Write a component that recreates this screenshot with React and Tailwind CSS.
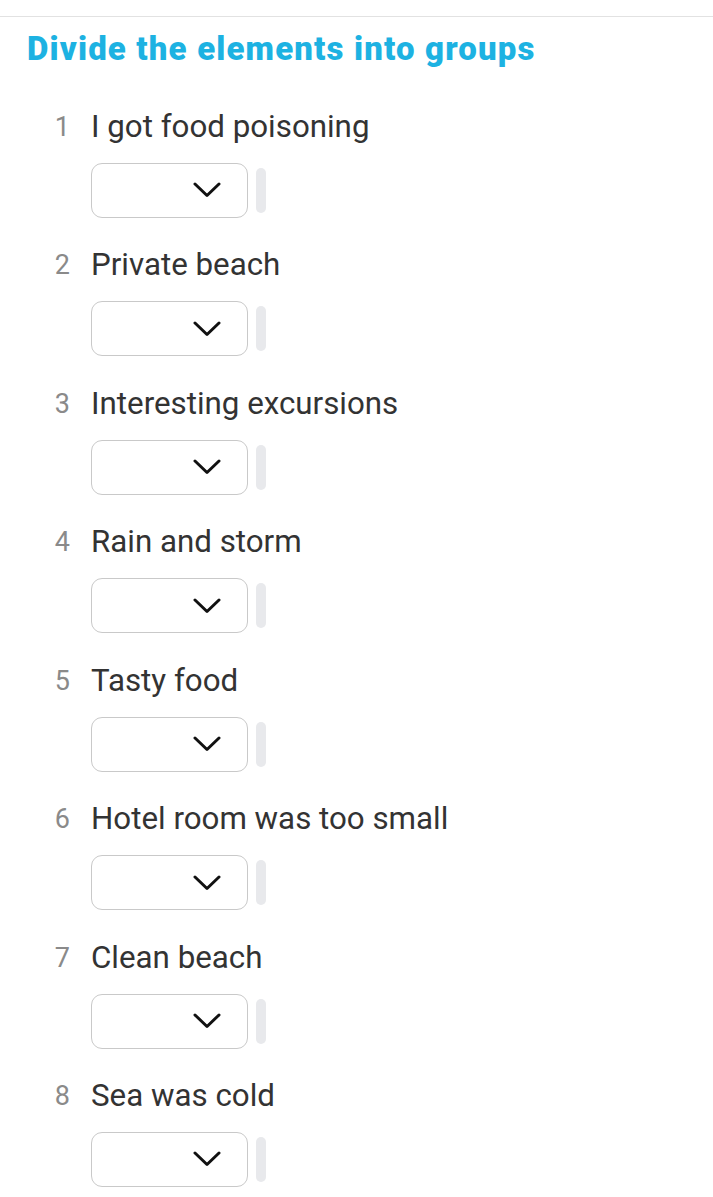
import React from "react";

const items = [
  "I got food poisoning",
  "Private beach",
  "Interesting excursions",
  "Rain and storm",
  "Tasty food",
  "Hotel room was too small",
  "Clean beach",
  "Sea was cold",
];

const Chevron = () => (
  <svg width="28" height="16" viewBox="0 0 28 16" fill="none">
    <path d="M2 2 L14 13.5 L26 2" stroke="#111" strokeWidth="3" strokeLinecap="round" strokeLinejoin="round" />
  </svg>
);

const GroupSelect = () => (
  <div className="flex items-center gap-[8px]">
    <div className="w-[157px] h-[55px] rounded-[11px] border border-[#c9c9c9] bg-white flex items-center justify-end pr-[26px]">
      <Chevron />
    </div>
    <div className="w-[10px] h-[45px] rounded-full bg-[#e8e9ec]" />
  </div>
);

export default function App() {
  return (
    <div className="min-h-screen bg-white pt-[16px]" style={{ fontFamily: "Roboto, 'Liberation Sans', sans-serif" }}>
      <div className="border-t border-[#e2e2e2] pt-[12px] pl-[27px]">
        <h1 className="text-[33px] leading-[40px] font-black text-[#1db2e2] tracking-[1.15px]">
          Divide the elements into groups
        </h1>
        <ol className="mt-[38px]">
          {items.map((label, i) => (
            <li key={label} className="flex mb-[27.9px]">
              <span className="w-[43px] text-right text-[27px] leading-[40px] text-[#8a8a8a]">{i + 1}</span>
              <div className="ml-[21px] flex flex-col">
                <span className="text-[31.3px] leading-[40px] text-[#333333]">{label}</span>
                <div className="mt-[15.6px]">
                  <GroupSelect />
                </div>
              </div>
            </li>
          ))}
        </ol>
      </div>
    </div>
  );
}
